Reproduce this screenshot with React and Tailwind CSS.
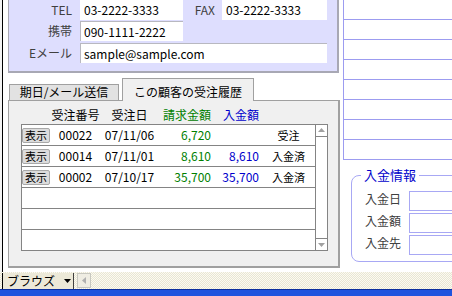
const rows = [
  { no: '00022', date: '07/11/06', amt: '6,720', dep: '', st: '受注' },
  { no: '00014', date: '07/11/01', amt: '8,610', dep: '8,610', st: '入金済' },
  { no: '00002', date: '07/10/17', amt: '35,700', dep: '35,700', st: '入金済' },
  null,
  null,
  null,
];

function Arrow({ dir }) {
  if (dir === 'up')
    return (
      <svg width="7" height="4" viewBox="0 0 7 4">
        <polygon points="0,4 7,4 3.5,0" fill="#a0a0a0" />
      </svg>
    );
  return (
    <svg width="7" height="4" viewBox="0 0 7 4">
      <polygon points="0,0 7,0 3.5,4" fill="#a0a0a0" />
    </svg>
  );
}

export default function App() {
  return (
    <div className="w-[452px] h-[296px] overflow-hidden bg-white flex flex-col font-['Noto_Sans_CJK_JP',sans-serif] text-[12px] leading-[16px] text-black">
      <div className="flex h-[272px] shrink-0">
        <div className="w-[2px] shrink-0 bg-[#f4f4f4]" />
        <div className="w-px shrink-0 bg-black" />
        <div className="w-[337px] shrink-0 flex flex-col pl-[5px] bg-white">
          {/* top contact panel */}
          <div className="w-[331px] h-[73px] bg-[#dedefe] border-l border-r-2 border-b-2 border-[#a8a8b4] flex flex-col">
            <div className="flex h-[20px] items-center">
              <div className="w-[63px] text-right text-[#404040]">TEL</div>
              <div className="ml-[8px] w-[103px] h-[20px] bg-white flex items-center pl-[4px]">03-2222-3333</div>
              <div className="w-[32px] text-right text-[#404040]">FAX</div>
              <div className="ml-[7px] w-[105px] h-[20px] bg-white flex items-center pl-[4px]">03-2222-3333</div>
            </div>
            <div className="flex h-[20px] mt-[1px] items-center">
              <div className="w-[63px] text-right text-[#404040]">携帯</div>
              <div className="ml-[8px] w-[103px] h-[20px] bg-white border-t border-l border-[#b8b8c0] flex items-center pl-[3px]">090-1111-2222</div>
            </div>
            <div className="flex h-[20px] mt-[2px] items-center">
              <div className="w-[63px] text-right text-[#404040]">Eメール</div>
              <div className="ml-[8px] w-[247px] h-[20px] bg-white border-t border-l border-[#b8b8c0] flex items-center pl-[3px]">sample@sample.com</div>
            </div>
          </div>

          {/* tabs */}
          <div className="mt-[5px] h-[23px] -mb-px flex relative z-10">
            <div className="self-start mt-[6px] ml-[1px] w-[110px] h-[16px] bg-[#e2e2e2] border-t border-l border-r border-[#a0a0a0] flex justify-center leading-[13px]">
              期日/メール送信
            </div>
            <div className="ml-[3px] w-[132px] h-[23px] bg-[#f0f0f0] border-t border-l border-r border-[#a0a0a0] flex justify-center pt-[6px] leading-[14px]">
              この顧客の受注履歴
            </div>
          </div>

          {/* tab panel */}
          <div className="w-[332px] h-[168px] bg-[#f0f0f0] border-t border-l border-r-2 border-b-2 border-[#a0a0a0] flex flex-col pl-[12px]">
            <div className="h-[23px] pt-[6px] pl-[1px] grid grid-cols-[28px_51px_57px_56px_48px_53px]">
              <div />
              <div className="text-center">受注番号</div>
              <div className="text-center">受注日</div>
              <div className="text-right pr-[3px] text-[#008000]">請求金額</div>
              <div className="text-right pr-[3px] text-[#0000cc]">入金額</div>
              <div />
            </div>
            <div className="w-[307px] h-[127px] border border-[#848484] bg-white flex">
              <div className="w-[293px] flex flex-col">
                {rows.map((r, i) => (
                  <div
                    key={i}
                    className={
                      'h-[21px] shrink-0 grid grid-cols-[28px_51px_57px_56px_48px_53px] items-center ' +
                      (i < 5 ? 'border-b border-[#848484]' : '')
                    }
                  >
                    {r ? (
                      <>
                        <div className="h-[15px] bg-[#dcdcdc] border border-[#a8a8a8] rounded-[2px] flex items-center justify-center text-[11px] leading-[13px]">
                          表示
                        </div>
                        <div className="text-center">{r.no}</div>
                        <div className="text-center">{r.date}</div>
                        <div className="text-right pr-[3px] text-[#008000]">{r.amt}</div>
                        <div className="text-right pr-[3px] text-[#0000cc]">{r.dep}</div>
                        <div className="text-center text-[11px]">{r.st}</div>
                      </>
                    ) : null}
                  </div>
                ))}
              </div>
              <div className="w-[12px] border-l border-[#848484] flex flex-col">
                <div className="h-[12px] border-b border-[#848484] flex items-center justify-center pb-[1px]">
                  <Arrow dir="up" />
                </div>
                <div className="flex-1" />
                <div className="h-[12px] border-t border-[#848484] flex items-center justify-center">
                  <Arrow dir="down" />
                </div>
              </div>
            </div>
          </div>
        </div>

        {/* right area */}
        <div className="flex-1 min-w-0 pl-[3px] flex flex-col">
          <div className="border-l border-[#9c9cf0] flex flex-col">
            {[0, 1, 2, 3, 4, 5, 6, 7].map((i) => (
              <div key={i} className="h-[20px] border-b border-[#9c9cf0]" />
            ))}
          </div>
          <fieldset className="mt-[7px] ml-[8px] w-[130px] shrink-0 border border-[#a8a8f4] rounded-[8px] px-[9px] pb-[6px]">
            <legend className="px-[3px] text-[13px] leading-[16px] text-[#0000cc]">入金情報</legend>
            <div className="mt-[8px] flex flex-col gap-[2px]">
              {['入金日', '入金額', '入金先'].map((l) => (
                <div key={l} className="flex items-center h-[20px]">
                  <div className="ml-[4px] w-[44px] shrink-0 text-[#404040] mb-[5px]">{l}</div>
                  <div className="w-[100px] h-[20px] border border-[#a8a8f4] bg-white shrink-0" />
                </div>
              ))}
            </div>
          </fieldset>
        </div>
      </div>

      {/* status bar */}
      <div className="h-[17px] shrink-0 flex items-start pt-[1px] bg-[image:repeating-conic-gradient(#e9e6d3_0%_25%,#fbfaf2_0%_50%)] bg-[length:2px_2px]">
        <div className="w-[2px] shrink-0" />
        <div className="w-[72px] shrink-0 h-[16px] bg-[#ece9d8] border-l border-l-black border-r border-r-[#404040] flex items-center pl-[4px]">
          <span className="leading-[14px]">ブラウズ</span>
          <svg className="ml-auto mr-[2px]" width="7" height="4" viewBox="0 0 7 4">
            <polygon points="0,0 7,0 3.5,4" fill="#000" />
          </svg>
        </div>
        <div className="ml-[3px] w-[14px] shrink-0 h-[15px] bg-[#efede3] border border-[#c8c8c0] flex items-center justify-center">
          <svg width="4" height="7" viewBox="0 0 4 7">
            <polygon points="4,0 4,7 0,3.5" fill="#b0b0b0" />
          </svg>
        </div>
      </div>
      <div className="h-[7px] shrink-0 bg-[#1f53de] border-t border-[#0c2f9e]" />
    </div>
  );
}
